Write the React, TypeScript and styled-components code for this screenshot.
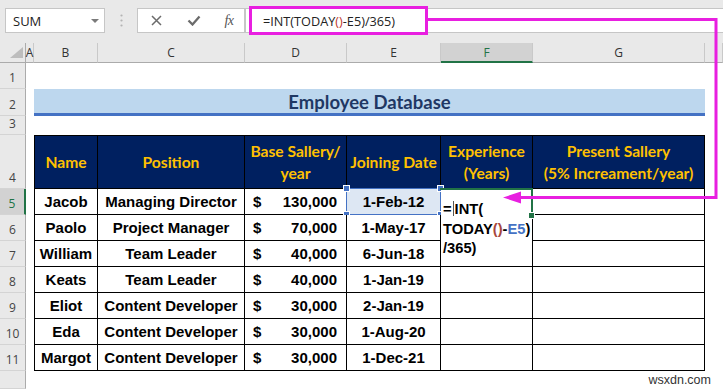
import React from 'react';
import styled, { createGlobalStyle } from 'styled-components';

const GlobalStyle = createGlobalStyle`
  html, body {
    margin: 0;
    padding: 0;
    background: #fff;
  }
  body {
    width: 723px;
    height: 389px;
    overflow: hidden;
    font-family: "Liberation Sans", Arial, sans-serif;
  }
`;

const MAGENTA = '#e81fe0';
const GREEN = '#217346';
const SEL_BLUE = '#4472c4';

const Page = styled.div`
  position: relative;
  width: 723px;
  height: 389px;
  overflow: hidden;
  display: flex;
  flex-direction: column;
  background: #fff;
`;

// formula bar strip
const TopBar = styled.div`
  height: 43px;
  flex: none;
  box-sizing: border-box;
  background: #e9e9e9;
  display: flex;
  align-items: flex-start;
  padding: 8px 0 0 5px;
`;

const NameBox = styled.div`
  width: 100px;
  height: 25px;
  box-sizing: border-box;
  background: #fff;
  border: 1px solid #c6c6c6;
  display: flex;
  align-items: center;
  justify-content: space-between;
  padding: 0 5px 0 7px;
  font-family: "Open Sans", sans-serif;
  font-size: 13px;
  color: #222;
`;

const DropArrow = styled.span`
  width: 0;
  height: 0;
  border-left: 4px solid transparent;
  border-right: 4px solid transparent;
  border-top: 4px solid #7a7a7a;
`;

const Grip = styled.div`
  width: 32px;
  height: 25px;
  display: flex;
  align-items: center;
  justify-content: center;
`;

const FxBox = styled.div`
  width: 108px;
  height: 25px;
  box-sizing: border-box;
  background: #fff;
  border: 1px solid #c6c6c6;
  display: grid;
  grid-template-columns: 37px 37px 34px;
  align-items: center;
  justify-items: center;
`;

const FxLabel = styled.span`
  font-family: "Liberation Serif", serif;
  font-style: italic;
  font-size: 14px;
  color: #555;
  letter-spacing: -0.5px;
`;

const FormulaInput = styled.div`
  flex: 1;
  height: 25px;
  box-sizing: border-box;
  background: #fff;
  border: 1px solid #c6c6c6;
  border-right: none;
  display: flex;
  align-items: center;
  padding-left: 17px;
  font-family: "Open Sans", sans-serif;
  font-size: 12.7px;
  color: #222;
  white-space: nowrap;
`;

const Paren = styled.span`
  color: #c0392b;
`;

// worksheet
const Sheet = styled.div`
  flex: 1;
  display: grid;
  grid-template-columns: 26px 8px 64px 147px 102px 94px 92px 172px 1fr;
  grid-template-rows: 20px 26px 27px 19px 54px repeat(7, 26px) 1fr;
  background: #fff;
`;

const Corner = styled.div`
  background: #e9e9e9;
  border-right: 1px solid #ababab;
  border-bottom: 1px solid #ababab;
  display: flex;
  align-items: flex-end;
  justify-content: flex-end;
  padding: 0 2px 4px 0;
`;

const ColHead = styled.div<{ $active?: boolean }>`
  box-sizing: border-box;
  background: ${p => (p.$active ? '#d2d2d2' : '#e9e9e9')};
  border-right: 1px solid #c9c9c9;
  border-bottom: ${p => (p.$active ? `2px solid ${GREEN}` : '1px solid #ababab')};
  display: flex;
  align-items: center;
  justify-content: center;
  font-family: "Open Sans", sans-serif;
  font-size: 12px;
  color: ${p => (p.$active ? GREEN : '#333')};
  overflow: visible;
`;

const RowHead = styled.div<{ $active?: boolean }>`
  box-sizing: border-box;
  background: ${p => (p.$active ? '#d2d2d2' : '#e9e9e9')};
  border-right: ${p => (p.$active ? `2px solid ${GREEN}` : '1px solid #ababab')};
  border-bottom: 1px solid #d4d4d4;
  display: flex;
  align-items: flex-end;
  justify-content: center;
  padding-bottom: 2px;
  font-family: "Open Sans", sans-serif;
  font-size: 12px;
  color: ${p => (p.$active ? GREEN : '#444')};
`;

const Blank = styled.div<{ $span?: number }>`
  grid-column: span ${p => p.$span ?? 1};
`;

const TitleBand = styled.div`
  grid-column: span 6;
  box-sizing: border-box;
  background: #bdd7ee;
  border-bottom: 3px solid #4472c4;
  display: flex;
  align-items: center;
  justify-content: center;
  padding-top: 1px;
  font-family: Lato, "Open Sans", sans-serif;
  font-weight: 700;
  font-size: 18.5px;
  color: #1f3864;
`;

const TCell = styled.div<{ $first?: boolean; $selected?: boolean; $split?: boolean }>`
  position: relative;
  box-sizing: border-box;
  border-right: 1px solid #000;
  border-bottom: 1px solid #000;
  border-left: ${p => (p.$first ? '1px solid #000' : 'none')};
  background: ${p => (p.$selected ? '#dde7f3' : '#fff')};
  display: flex;
  align-items: center;
  justify-content: ${p => (p.$split ? 'space-between' : 'center')};
  padding: ${p => (p.$split ? '0 9px 0 8px' : '0')};
  font-family: "Liberation Sans", Arial, sans-serif;
  font-weight: 700;
  font-size: 15px;
  color: #000;
  white-space: nowrap;
`;

const HeadCell = styled(TCell)`
  background: #002060;
  border-top: 1px solid #000;
  color: #ffc000;
  font-family: Lato, "Open Sans", sans-serif;
  font-size: 15.6px;
  line-height: 22px;
  text-align: center;
  white-space: pre-line;
`;

const SelFrame = styled.div`
  position: absolute;
  top: -1px;
  left: -1px;
  right: -1px;
  bottom: -1px;
  border: 1px solid ${SEL_BLUE};
  pointer-events: none;
`;

const Handle = styled.span<{ $x: 'left' | 'right'; $y: 'top' | 'bottom'; $color: string }>`
  position: absolute;
  ${p => p.$x}: -4px;
  ${p => p.$y}: -4px;
  width: 5px;
  height: 5px;
  background: ${p => p.$color};
  border: 1px solid #fff;
`;

// F5 while being edited: text spills down over F6 and F7
const EditBox = styled.div`
  position: absolute;
  top: 0;
  left: 0;
  width: 91px;
  height: 77px;
  box-sizing: border-box;
  background: #fff;
  padding: 11px 0 0 2px;
  font-family: "Liberation Sans", Arial, sans-serif;
  font-weight: 700;
  font-size: 14.7px;
  line-height: 19.5px;
  color: #000;
  z-index: 2;
  white-space: nowrap;
`;

const Caret = styled.span`
  display: inline-block;
  width: 1px;
  height: 15px;
  background: #555;
  vertical-align: -2px;
  margin: 0 1px;
`;

const EditParen = styled.span`
  color: #a8473c;
`;

const EditRef = styled.span`
  color: #4472c4;
`;

const ActiveFrame = styled.div`
  position: absolute;
  top: -1px;
  left: -1px;
  width: 93px;
  height: 27px;
  box-sizing: border-box;
  border-top: 2px solid ${GREEN};
  border-right: 2px solid ${GREEN};
  z-index: 3;
  pointer-events: none;
`;

const Watermark = styled.div`
  position: absolute;
  right: 12px;
  bottom: 2px;
  font-family: "Liberation Sans", Arial, sans-serif;
  font-size: 12.5px;
  color: #333;
`;

const Annotation = styled.svg`
  position: absolute;
  left: 0;
  top: 0;
  width: 723px;
  height: 389px;
  pointer-events: none;
  z-index: 10;
`;

const rows = [
  ['Jacob', 'Managing Director', '130,000', '1-Feb-12'],
  ['Paolo', 'Project Manager', '70,000', '1-May-17'],
  ['William', 'Team Leader', '40,000', '6-Jun-18'],
  ['Keats', 'Team Leader', '40,000', '1-Jan-19'],
  ['Eliot', 'Content Developer', '30,000', '2-Jan-19'],
  ['Eda', 'Content Developer', '30,000', '1-Aug-20'],
  ['Margot', 'Content Developer', '30,000', '1-Dec-21'],
];

const headers = [
  'Name',
  'Position',
  'Base Sallery/\nyear',
  'Joining Date',
  'Experience\n(Years)',
  'Present Sallery\n(5% Increament/year)',
];

const cols = ['A', 'B', 'C', 'D', 'E', 'F', 'G', ''];

const App: React.FC = () => {
  return (
    <Page>
      <GlobalStyle />
      <TopBar>
        <NameBox>
          SUM
          <DropArrow />
        </NameBox>
        <Grip>
          <svg width="3" height="13" viewBox="0 0 3 13">
            <circle cx="1.5" cy="1.5" r="1.1" fill="#b3b3b3" />
            <circle cx="1.5" cy="6.5" r="1.1" fill="#b3b3b3" />
            <circle cx="1.5" cy="11.5" r="1.1" fill="#b3b3b3" />
          </svg>
        </Grip>
        <FxBox>
          <svg width="11" height="11" viewBox="0 0 11 11">
            <path d="M1 1 L10 10 M10 1 L1 10" stroke="#6b6b6b" strokeWidth="1.5" />
          </svg>
          <svg width="14" height="11" viewBox="0 0 14 11">
            <path d="M1.5 5.5 L5.5 9.5 L12.5 1.5" stroke="#6b6b6b" strokeWidth="2.3" fill="none" />
          </svg>
          <FxLabel>fx</FxLabel>
        </FxBox>
        <FormulaInput>
          =INT(TODAY<Paren>()</Paren>-E5)/365)
        </FormulaInput>
      </TopBar>

      <Sheet>
        <Corner>
          <svg width="13" height="11" viewBox="0 0 13 11">
            <polygon points="13,0 13,11 0,11" fill="#bdbdbd" />
          </svg>
        </Corner>
        {cols.map((c, i) => (
          <ColHead key={i} $active={c === 'F'}>
            {c}
          </ColHead>
        ))}

        <RowHead>1</RowHead>
        <Blank $span={8} />

        <RowHead>2</RowHead>
        <Blank />
        <TitleBand>Employee Database</TitleBand>
        <Blank />

        <RowHead>3</RowHead>
        <Blank $span={8} />

        <RowHead>4</RowHead>
        <Blank />
        {headers.map((h, i) => (
          <HeadCell key={h} $first={i === 0}>
            {h}
          </HeadCell>
        ))}
        <Blank />

        {rows.map((r, i) => (
          <React.Fragment key={r[0]}>
            <RowHead $active={i === 0}>{i + 5}</RowHead>
            <Blank />
            <TCell $first>{r[0]}</TCell>
            <TCell>{r[1]}</TCell>
            <TCell $split>
              <span>$</span>
              <span>{r[2]}</span>
            </TCell>
            <TCell $selected={i === 0}>
              {r[3]}
              {i === 0 && (
                <SelFrame>
                  <Handle $x="left" $y="top" $color={SEL_BLUE} />
                  <Handle $x="right" $y="top" $color={SEL_BLUE} />
                  <Handle $x="left" $y="bottom" $color={SEL_BLUE} />
                  <Handle $x="right" $y="bottom" $color={SEL_BLUE} />
                </SelFrame>
              )}
            </TCell>
            <TCell>
              {i === 0 && (
                <>
                  <EditBox>
                    <div>
                      =<Caret />INT(
                    </div>
                    <div>
                      TODAY<EditParen>()</EditParen>-<EditRef>E5</EditRef>)
                    </div>
                    <div>/365)</div>
                  </EditBox>
                  <ActiveFrame>
                    <Handle $x="right" $y="bottom" $color={GREEN} />
                  </ActiveFrame>
                </>
              )}
            </TCell>
            <TCell />
            <Blank />
          </React.Fragment>
        ))}

        <RowHead />
        <Blank $span={8} />
      </Sheet>

      <Annotation viewBox="0 0 723 389">
        <rect x="250.5" y="7.5" width="176" height="26" fill="none" stroke={MAGENTA} strokeWidth="3" />
        <polyline
          points="428,19.5 716,19.5 716,197.5 518,197.5"
          fill="none"
          stroke={MAGENTA}
          strokeWidth="3"
        />
        <polygon points="503,197.5 521,191.5 521,203.5" fill={MAGENTA} />
      </Annotation>

      <Watermark>wsxdn.com</Watermark>
    </Page>
  );
};

export default App;
